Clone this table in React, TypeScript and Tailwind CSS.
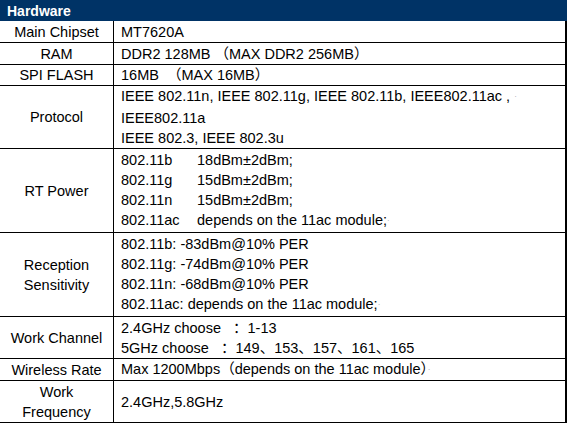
import React from 'react';

type Row = {
  label: string[];
  lines: React.ReactNode[];
  h: string;
};

const Mark = () => <span className="text-[8px] text-gray-400 align-middle">·</span>;

const Pair = ({ a, b }: { a: string; b: string }) => (
  <span>
    <span className="inline-block w-[76px]">{a}</span>
    {b}
  </span>
);

const rows: Row[] = [
  { label: ['Main Chipset'], lines: ['MT7620A'], h: 'h-[22px]' },
  { label: ['RAM'], lines: ['DDR2 128MB （MAX DDR2 256MB）'], h: 'h-[22px]' },
  { label: ['SPI FLASH'], lines: ['16MB  （MAX 16MB）'], h: 'h-[21px]' },
  {
    label: ['Protocol'],
    lines: [
      <span>IEEE 802.11n, IEEE 802.11g, IEEE 802.11b, IEEE802.11ac , <Mark /></span>,
      'IEEE802.11a',
      'IEEE 802.3, IEEE 802.3u',
    ],
    h: 'h-[63px]',
  },
  {
    label: ['RT Power'],
    lines: [
      <Pair a="802.11b" b="18dBm±2dBm;" />,
      <Pair a="802.11g" b="15dBm±2dBm;" />,
      <Pair a="802.11n" b="15dBm±2dBm;" />,
      <span>
        <span className="inline-block w-[76px]">802.11ac</span>depends on the 11ac module;<Mark />
      </span>,
    ],
    h: 'h-[84px]',
  },
  {
    label: ['Reception', 'Sensitivity'],
    lines: [
      '802.11b: -83dBm@10% PER',
      '802.11g: -74dBm@10% PER',
      '802.11n: -68dBm@10% PER',
      <span>802.11ac: depends on the 11ac module;<Mark /></span>,
    ],
    h: 'h-[84px]',
  },
  {
    label: ['Work Channel'],
    lines: ['2.4GHz choose   ：1-13', '5GHz choose   ：149、153、157、161、165'],
    h: 'h-[42px]',
  },
  {
    label: ['Wireless Rate'],
    lines: [<span>Max 1200Mbps（depends on the 11ac module）<Mark /></span>],
    h: 'h-[22px]',
  },
  { label: ['Work', 'Frequency'], lines: ['2.4GHz,5.8GHz'], h: 'h-[42px]' },
];

export default function App() {
  return (
    <div
      className="w-[570px] h-[424px] bg-white text-black text-[14.5px]"
      style={{ fontFamily: '"Liberation Sans", Arial, "Noto Sans CJK SC", sans-serif' }}
    >
      <div className="w-[567px]">
        <div className="h-[21px] bg-[#003366] text-white text-[14px] font-bold pl-[7px] flex items-center leading-5">
          Hardware
        </div>
        <div className="border-r-2 border-black">
          {rows.map((r, i) => (
            <div key={i} className={`flex border-b border-black ${r.h}`}>
              <div className="w-[114px] shrink-0 border-r border-black flex flex-col items-center justify-center leading-5 text-center">
                {r.label.map((l, j) => (
                  <div key={j}>{l}</div>
                ))}
              </div>
              <div className="flex-1 pl-[7px] flex flex-col justify-center leading-5 whitespace-pre">
                {r.lines.map((l, j) => (
                  <div key={j}>{l}</div>
                ))}
              </div>
            </div>
          ))}
        </div>
      </div>
    </div>
  );
}
